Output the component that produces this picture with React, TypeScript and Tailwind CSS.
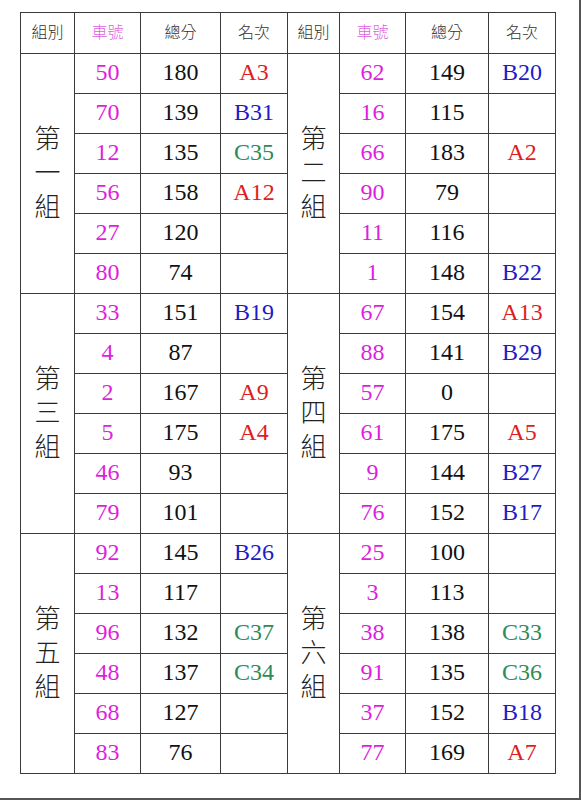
type Row = [string, string, string];

const groups: { name: string; rows: Row[] }[] = [
  { name: '第一組', rows: [['50', '180', 'A3'], ['70', '139', 'B31'], ['12', '135', 'C35'], ['56', '158', 'A12'], ['27', '120', ''], ['80', '74', '']] },
  { name: '第二組', rows: [['62', '149', 'B20'], ['16', '115', ''], ['66', '183', 'A2'], ['90', '79', ''], ['11', '116', ''], ['1', '148', 'B22']] },
  { name: '第三組', rows: [['33', '151', 'B19'], ['4', '87', ''], ['2', '167', 'A9'], ['5', '175', 'A4'], ['46', '93', ''], ['79', '101', '']] },
  { name: '第四組', rows: [['67', '154', 'A13'], ['88', '141', 'B29'], ['57', '0', ''], ['61', '175', 'A5'], ['9', '144', 'B27'], ['76', '152', 'B17']] },
  { name: '第五組', rows: [['92', '145', 'B26'], ['13', '117', ''], ['96', '132', 'C37'], ['48', '137', 'C34'], ['68', '127', ''], ['83', '76', '']] },
  { name: '第六組', rows: [['25', '100', ''], ['3', '113', ''], ['38', '138', 'C33'], ['91', '135', 'C36'], ['37', '152', 'B18'], ['77', '169', 'A7']] },
];

function rankColor(r: string) {
  if (r.startsWith('A')) return 'text-[#e01e1e]';
  if (r.startsWith('B')) return 'text-[#1c1cc8]';
  return 'text-[#2e8b57]';
}

const cell = 'border border-[#3a3a3a] text-center align-middle p-0 h-[40px]';
const head = 'border border-[#3a3a3a] text-center align-middle p-0 h-[41px] text-[16px] text-[#333] font-light';

function GroupCells({ name, rowSpan }: { name: string; rowSpan: number }) {
  return (
    <td rowSpan={rowSpan} className={cell + ' text-[26px] leading-[34px] text-[#222] font-light'}>
      {name.split('').map((c, i) => (
        <div key={i}>{c}</div>
      ))}
    </td>
  );
}

function DataCells({ row }: { row: Row }) {
  return (
    <>
      <td className={cell + ' pb-[3px] text-[#dd1fdd]'}>{row[0]}</td>
      <td className={cell + ' pb-[3px] text-[#111]'}>{row[1]}</td>
      <td className={cell + ' pb-[3px] ' + rankColor(row[2])}>{row[2]}</td>
    </>
  );
}

export default function App() {
  const pairs = [[groups[0], groups[1]], [groups[2], groups[3]], [groups[4], groups[5]]];
  return (
    <div
      className="w-[581px] h-[800px] bg-white border-r-2 border-b-2 border-[#555] box-border pt-[12px] pl-[20px]"
      style={{ fontFamily: '"Liberation Serif", "Noto Sans CJK TC", serif' }}
    >
      <table className="border-collapse table-fixed text-[24px]">
        <colgroup>
          <col className="w-[54px]" />
          <col className="w-[66px]" />
          <col className="w-[80px]" />
          <col className="w-[67px]" />
          <col className="w-[52px]" />
          <col className="w-[66px]" />
          <col className="w-[83px]" />
          <col className="w-[67px]" />
        </colgroup>
        <thead>
          <tr>
            <th className={head}>組別</th>
            <th className={head + ' text-[#e060e0]'}>車號</th>
            <th className={head}>總分</th>
            <th className={head}>名次</th>
            <th className={head}>組別</th>
            <th className={head + ' text-[#e060e0]'}>車號</th>
            <th className={head}>總分</th>
            <th className={head}>名次</th>
          </tr>
        </thead>
        <tbody>
          {pairs.map(([l, r], gi) =>
            l.rows.map((row, i) => (
              <tr key={gi + '-' + i}>
                {i === 0 && <GroupCells name={l.name} rowSpan={6} />}
                <DataCells row={row} />
                {i === 0 && <GroupCells name={r.name} rowSpan={6} />}
                <DataCells row={r.rows[i]} />
              </tr>
            ))
          )}
        </tbody>
      </table>
    </div>
  );
}
